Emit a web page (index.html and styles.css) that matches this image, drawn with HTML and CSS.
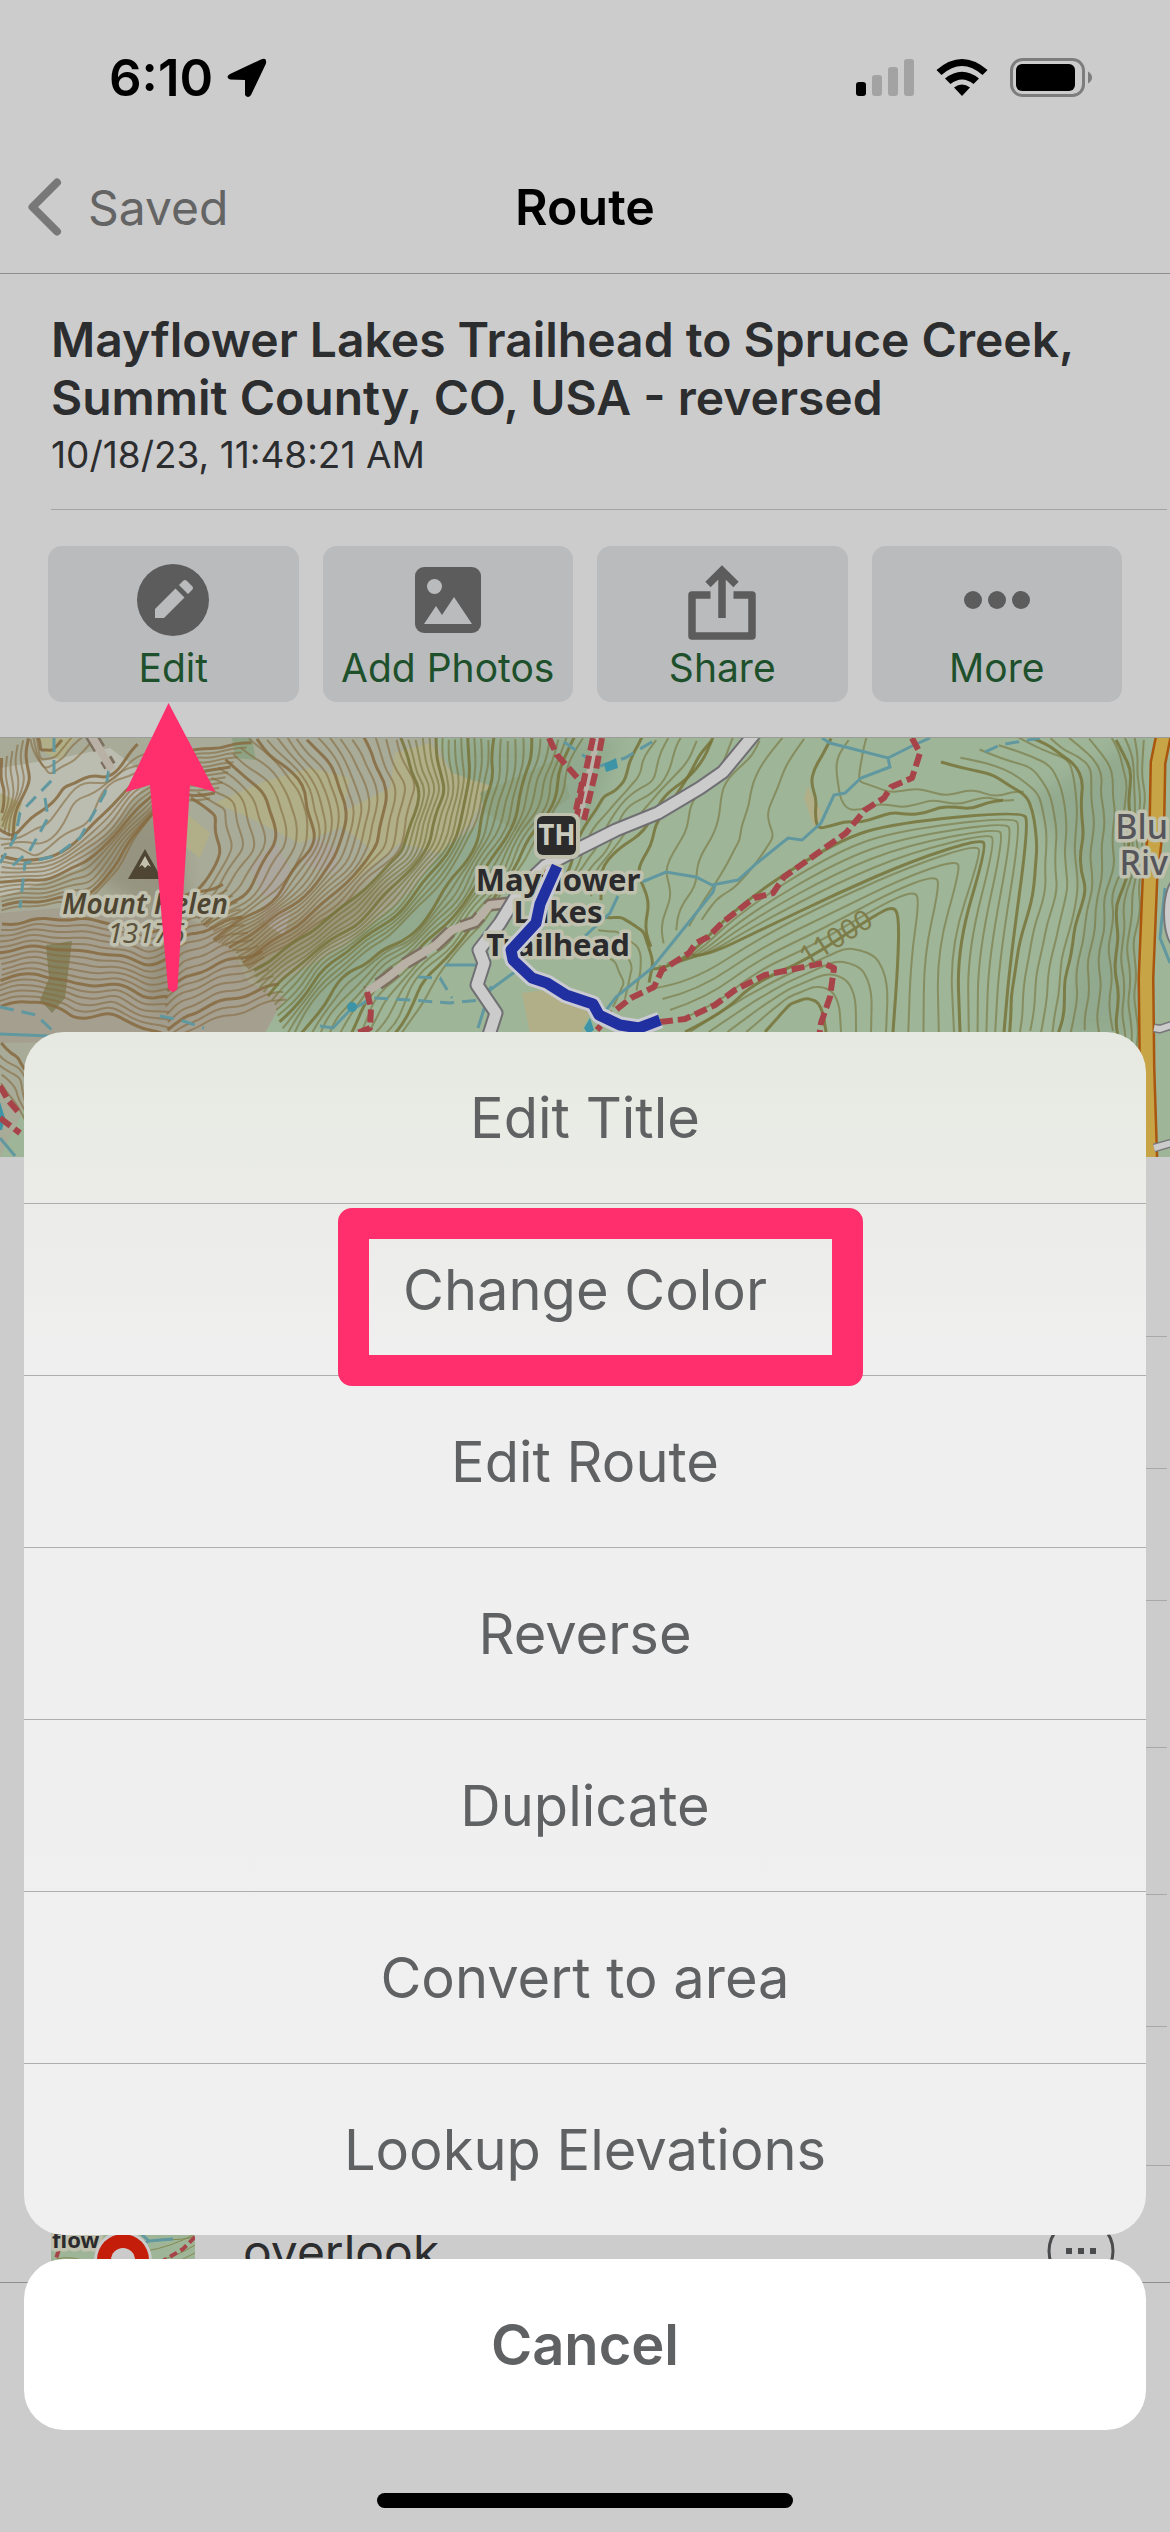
FILE: index.html
```html
<!DOCTYPE html>
<html lang="en">
<head>
  <meta charset="UTF-8" />
  <meta name="viewport" content="width=device-width, initial-scale=1.0" />
  <title>Route</title>
  <link rel="stylesheet" href="styles.css">
</head>
<body>
  <!-- Status bar -->
  <div class="status">
    <div class="status-left">
      <span>6:10</span>
      <svg width="40" height="40" viewBox="0 0 40 40"><path d="M3 16 L34 1.500 Q40 -1 39 5.500 L24 37 Q21 41 18 37 L18 22 L3 21.500 Q-2 19 3 16Z" /></svg>
    </div>
    <div class="status-right">
      <svg width="58" height="40" viewBox="0 0 58 40">
        <rect x="0" y="24" width="10" height="14" rx="3" />
        <g fill="#a3a3a3">
          <rect x="16" y="17" width="10" height="21" rx="3" />
          <rect x="32" y="9" width="10" height="29" rx="3" />
          <rect x="48" y="1" width="10" height="37" rx="3" />
        </g>
      </svg>
      <svg width="52" height="40" viewBox="0 0 52 40">
        <path d="M0.500 12 Q26 -10 51.500 12 L46.500 17 Q26 -1 5.500 17Z" />
        <path d="M9 20.500 Q26 7 43 20.500 L37.500 26 Q26 17 14.500 26Z" />
        <path d="M18 29.500 Q26 23.500 34 29.500 L26 38Z" />
      </svg>
      <svg width="82" height="40" viewBox="0 0 82 40">
        <rect x="1.500" y="1.500" width="72" height="36" rx="11" fill="none" stroke="#7d7d7d" stroke-width="3" />
        <rect x="6" y="6" width="59" height="27" rx="6" />
        <path d="M78 13.500 Q82 16 82 19.500 Q82 23 78 25.500Z" fill="#7d7d7d" />
      </svg>
    </div>
  </div>

  <!-- Nav bar -->
  <header class="nav">
    <a class="back" href="#">
      <svg width="36" height="60" viewBox="0 0 36 60"><path d="M29 5.500 L4.500 30 L29 54.500" fill="none" stroke="#787878" stroke-width="8" stroke-linecap="round" stroke-linejoin="round" /></svg>
      Saved
    </a>
    <h1>Route</h1>
  </header>

  <main>
    <section class="info">
      <h2>Mayflower Lakes Trailhead to Spruce Creek, Summit County, CO, USA - reversed</h2>
      <p>10/18/23, 11:48:21 AM</p>
    </section>

    <section class="actions">
      <div class="action">
        <button type="button">
          <svg width="72" height="72" viewBox="0 0 72 72">
            <circle cx="36" cy="36" r="36" />
            <path class="cut" d="M18 45 L38.500 24.500 L47.500 33.500 L27 54 H18Z M42 21 L46 17 Q48 15 50 17 L55 22 Q57 24 55 26 L51 30Z" />
          </svg>
          Edit
        </button>
        <svg class="arrow" width="96" height="292" viewBox="0 0 96 292">
          <path d="M43.500 1 L90.500 90 L65 83 L52.500 286 Q48 294 43 286 L25 83 L0.500 90Z" />
        </svg>
      </div>
      <div class="action">
        <button type="button">
          <svg width="72" height="72" viewBox="0 0 72 72">
            <rect x="3" y="3" width="66" height="66" rx="9" />
            <circle class="cut" cx="22.500" cy="22.500" r="7.500" />
            <path class="cut" d="M12 60 L24 42 L30 51 L42 33 L60 60Z" />
          </svg>
          Add Photos
        </button>
      </div>
      <div class="action">
        <button type="button">
          <svg width="72" height="76" viewBox="0 0 72 76">
            <g fill="none" stroke="#5c5c5c" stroke-width="7.500">
              <path d="M24.500 31 H6 V72 H66 V31 H47.500" stroke-linejoin="round" />
              <path d="M36 54 V8 M22 20.500 L36 6.500 L50 20.500" />
            </g>
          </svg>
          Share
        </button>
      </div>
      <div class="action">
        <button type="button">
          <svg width="72" height="72" viewBox="0 0 72 72">
            <circle cx="12" cy="36" r="9" />
            <circle cx="36" cy="36" r="9" />
            <circle cx="60" cy="36" r="9" />
          </svg>
          More
        </button>
      </div>
    </section>

    <!-- Map -->
    <svg class="map" viewBox="0 0 1170 419" preserveAspectRatio="xMidYMin slice">
      <defs>
        <filter id="soft" x="-20%" y="-20%" width="140%" height="140%"><feGaussianBlur stdDeviation="9" /></filter>
      </defs>
      <rect width="1170" height="419" fill="#9eb598" />
      <g fill="#8aa288" opacity="0.600" filter="url(#soft)">
        <path d="M450 0 L620 0 L590 90 L520 110 L440 190 L330 280 L290 290 L280 240 L420 150Z" />
        <path d="M1030 60 L1140 0 L1140 300 L1060 300 L1085 150Z" />
      </g>
      <path fill="#a8ab98" d="M0 0 H435 L452 36 L492 48 L476 88 L442 112 L414 150 L350 205 L268 250 L285 259 L262 300 H60 L0 419Z" />
      <path fill="#bcbdb1" d="M0 30 L60 20 L110 10 L150 40 L120 80 L80 130 L0 160Z" />
      <path fill="#a59f90" d="M0 175 L120 165 L222 190 L249 245 L285 259 L262 300 L0 305Z" />
      <path fill="#968b6c" opacity="0.700" filter="url(#soft)" d="M225 190 L300 180 L370 145 L405 150 L340 200 L265 248 L240 225Z" />
      <path fill="#8f8b76" opacity="0.700" filter="url(#soft)" d="M75 120 L140 60 L175 90 L190 170 L165 290 L145 250 L160 180 L110 150Z" />
      <g fill="#b0af88">
        <path d="M215 65 L260 45 L310 30 L350 40 L340 90 L300 105 L250 80Z" />
        <path d="M395 15 L430 5 L452 35 L490 48 L470 85 L440 115 L400 105 L350 145 L370 110 L330 80 L390 50Z" />
        <path d="M186 75 L210 95 L200 120 L180 105Z" />
        <path d="M0 55 L22 65 L15 95 L0 90Z" />
        <path d="M40 0 H75 L60 22 L45 15Z" />
        <path d="M522 255 L560 250 L592 272 L580 296 L530 296Z" />
        <path d="M808 48 L822 75 L815 92 L804 60Z" />
      </g>
      <g fill="#aca79e">
        <path d="M250 128 L275 104 L290 130 L285 160 L262 158Z" />
        <path d="M303 125 L315 102 L335 108 L338 135 L315 130Z" />
        <path d="M263 160 L290 175 L284 198 L264 184Z" />
      </g>
      <g fill="#8ea383">
        <path d="M232 0 H252 L256 22 L235 20Z" />
        <path d="M480 55 L560 20 L570 60 L520 95 L485 75Z" />
      </g>
      <path fill="#85835f" d="M46 207 L72 203 L65 260 L52 275 L40 262 L49 240Z" />

      <g id="contours" fill="none"></g>

      <g class="water">
        <path d="M822 0 L830 5 L888 20 L912 8 L930 0 M888 20 L890 29 L861 40 L845 55 L834 57 L821 85 L802 102 L788 100 L757 125 L738 142 L712 147 L696 139 L666 134 L642 144 M715 147 L713 154 L685 189 L652 230 L616 259 L604 275" />
        <path d="M1165 150 L1160 200 L1170 225 M618 158 L610 175 L585 198" />
        <path stroke-dasharray="14 8" d="M54 0 L54 40 L20 75 L15 100 L0 125 M45 60 L48 80 L30 112 L10 130 M109 30 L105 55 L80 100 L55 118 L25 125 L20 170 M355 270 L372 260 L410 262 L450 265 L480 262 L495 245 M418 239 L440 240 L452 260 M0 269 L36 277 L55 295 M160 278 L180 282 L204 290 M564 4 L590 22 M985 14 L1000 7 L1040 0 M600 28 L625 20 L655 2" />
        <path d="M0 296 L50 298 M0 400 L15 418 M320 288 L333 290 L350 272 M445 227 H478 M520 230 L490 252 L478 290" />
      </g>
      <g fill="#3d94a6">
        <circle cx="352" cy="269" r="5" />
        <path d="M604 26 L616 20 L618 30 L606 34Z M584 290 L590 280 L594 292 L588 296Z M0 364 L5 380 L2 392 L0 392Z" />
      </g>

      <!-- trails and roads -->
      <g fill="none" stroke-linejoin="round">
        <path stroke="#7d7060" stroke-width="13" stroke-dasharray="22 12" d="M509 165 L490 167 L475 184 L452 192 L436 207 L406 225 L387 240 L367 254 M88 -8 L110 28" />
        <path stroke="#bab1a6" stroke-width="8" d="M509 165 L490 167 L475 184 L452 192 L436 207 L406 225 L387 240 L367 254 M88 -8 L112 32" />
        <path class="road-case" d="M756 -6 L723 34 L700 50 L658 75 L616 92 L570 115 L545 128 L520 152 L500 185 L479 212 L484 225 L477 247 L496 275 L488 300" />
        <path class="road" d="M756 -6 L723 34 L700 50 L658 75 L616 92 L570 115 L545 128 L520 152 L500 185 L479 212 L484 225 L477 247 L496 275 L488 300" />
        <path stroke="#b9b5aa" stroke-width="6" d="M598 0 L590 32 L580 78" />
        <g class="trail">
          <path d="M367 254 L371 270 L370 290 L355 296" />
          <path d="M912 0 L920 15 L912 40 L891 49 L884 60 L865 72 L846 95 L815 117 L784 139 L773 155 L754 160 L723 184 L708 199 L696 205 L689 215 L662 232 L654 249 L631 260 L612 275 L597 292" />
          <path d="M660 284 L685 281 L715 267 L735 252 L765 237 L823 225 L834 230 L830 259 L821 285 L819 300" />
          <path d="M549 0 L557 17 L582 45 L576 72" />
          <path d="M593 0 L586 32 L576 82 M602 0 L596 32 L584 82" />
          <path d="M0 348 L8 362 L20 376 M0 380 L20 395" />
        </g>
        <path stroke="#a9560f" stroke-width="17" d="M1164 -5 L1158 25 L1157 80 L1150 140 L1146 240 L1147 330 L1150 425" />
        <path stroke="#c7a446" stroke-width="12" d="M1164 -5 L1158 25 L1157 80 L1150 140 L1146 240 L1147 330 L1150 425" />
        <path stroke="#77777a" stroke-width="9" d="M1154 290 L1160 291 L1175 286 M1154 410 L1175 404" />
        <path stroke="#cbcbcb" stroke-width="6" d="M1154 290 L1160 291 L1175 286 M1154 410 L1175 404" />
        <ellipse cx="1176" cy="175" rx="12" ry="34" fill="#cbcbcb" stroke="#77777a" stroke-width="2" />
      </g>

      <!-- map labels -->
      <path d="M145 111 L128 141 H162Z" fill="#4e4632" />
      <path d="M145 118 L139 129 L142 127 L145 130 L148 127 L151 129Z" fill="#c4c1ae" />
      <g class="halo">
        <text class="peak" x="145" y="176">Mount Helen</text>
        <text class="elev" x="146" y="205">13176</text>
        <text class="town" x="1168" y="101">Blu</text>
        <text class="town" x="1168" y="137">Riv</text>
        <text class="place" x="558" y="153">Mayflower</text>
        <text class="place" x="558" y="185">Lakes</text>
        <text class="place" x="558" y="218">Trailhead</text>
      </g>
      <text class="index" transform="translate(841 208) rotate(-32)">11000</text>
      <rect x="534" y="75" width="46" height="46" rx="8" fill="#bfbfae" />
      <rect x="537" y="78" width="39" height="39" rx="6" fill="#2b2b2b" />
      <text class="th" x="557" y="107">TH</text>

      <!-- the route itself -->
      <g fill="none" stroke-linejoin="round">
        <path stroke="#c9cad2" stroke-width="17" d="M555 131 L548 148 L540 166 L536 185 L511 212 L513 222 L532 240 L547 245 L566 257 L593 266 L599 277 L620 287 L639 290 L660 282" />
        <path stroke="#2130a0" stroke-width="11" d="M557 128 L548 148 L540 166 L536 185 L511 212 L513 222 L532 240 L547 245 L566 257 L593 266 L599 277 L620 287 L639 290 L660 282" />
      </g>
    </svg>

    <ul class="rows">
      <li class="tall"></li>
      <li></li>
      <li></li>
      <li class="mid"></li>
      <li class="mid"></li>
      <li></li>
      <li class="last"></li>
    </ul>

    <div class="waypoint">
      <svg width="144" height="144" viewBox="0 0 144 144">
        <rect width="144" height="144" fill="#9eb598" />
        <g fill="none" stroke="#85894f" stroke-width="1">
          <path d="M95 72 Q120 68 144 55 M105 82 Q125 78 144 66 M108 92 Q128 82 144 74 M5 80 Q20 76 40 84 M0 92 Q20 84 40 92 M110 60 Q125 62 144 58" />
        </g>
        <path d="M85 50 L98 62 L122 60 M98 62 L90 66" fill="none" stroke="#6198a0" stroke-width="3" />
        <path d="M144 58 L132 70 L112 82 M2 90 L8 70" fill="none" stroke="#a74449" stroke-width="4" stroke-dasharray="8 4" />
        <g class="halo">
          <text class="mini" x="1" y="69">flow</text>
        </g>
        <circle cx="72" cy="81" r="29" fill="#cbcbcb" />
        <circle cx="72" cy="81" r="26" fill="#c41e0b" />
        <circle cx="72" cy="81" r="12" fill="#cbcbcb" />
      </svg>
      <span>overlook</span>
      <button type="button" class="dots" aria-label="Waypoint options">
        <svg width="68" height="68" viewBox="0 0 68 68">
          <circle cx="34" cy="34" r="32" fill="none" stroke="#4a4b4d" stroke-width="3" />
          <path d="M19 31 h6 v6 h-6Z M31 31 h6 v6 h-6Z M43 31 h6 v6 h-6Z" fill="#4a4b4d" />
        </svg>
      </button>
    </div>
  </main>

  <footer class="tabbar"></footer>

  <!-- Action sheet -->
  <div class="sheet">
    <div class="options">
      <button type="button">Edit Title</button>
      <button type="button" class="marked">Change Color</button>
      <button type="button">Edit Route</button>
      <button type="button">Reverse</button>
      <button type="button">Duplicate</button>
      <button type="button">Convert to area</button>
      <button type="button">Lookup Elevations</button>
    </div>
    <button type="button" class="cancel">Cancel</button>
    <div class="home"></div>
  </div>

  <script src="script.js"></script>
</body>
</html>
```
FILE: styles.css
```css
*,
*::after {
  box-sizing: border-box;
}

body {
  margin: 0;
  min-height: 100vh;
  background-color: #ccc;
  font-family: Inter, "Liberation Sans", sans-serif;
  color: #2c2d2f;
}

button {
  border: none;
  margin: 0;
  padding: 0;
  background: none;
  font-family: inherit;
  cursor: pointer;
}

svg {
  display: block;
  flex: none;
}

/* status bar */
.status {
  display: flex;
  justify-content: space-between;
  align-items: center;
  height: 141px;
  padding: 14px 78px 0 109px;
  color: #000;
}

.status-left,
.status-right {
  display: flex;
  align-items: center;
}

.status-left {
  gap: 14px;
  font-size: 51px;
  font-weight: 600;
}

.status-right {
  gap: 22px;
}

/* nav bar */
.nav {
  display: grid;
  grid-template-columns: 1fr auto 1fr;
  align-items: center;
  height: 133px;
  border-bottom: 1px solid #8e8e8e;
}

.nav h1 {
  margin: 0;
  font-size: 50px;
  font-weight: 600;
  color: #000;
}

.back {
  display: flex;
  align-items: center;
  gap: 24px;
  padding-left: 28px;
  font-size: 48px;
  color: #646464;
  text-decoration: none;
}

.info {
  margin: 0 3px 0 51px;
  padding: 37px 40px 32px 0;
  border-bottom: 1px solid #a3a3a3;
}

.info h2 {
  margin: 0 0 6px;
  font-size: 48px;
  line-height: 58px;
  font-weight: 600;
}

.info p {
  margin: 0;
  font-size: 37px;
  line-height: 44px;
}

/* buttons above the map */
.actions {
  display: grid;
  grid-template-columns: repeat(4, 1fr);
  gap: 24px;
  padding: 36px 48px 35px;
}

.action {
  position: relative;
}

.action button {
  display: flex;
  flex-direction: column;
  align-items: center;
  justify-content: space-between;
  width: 100%;
  height: 156px;
  padding: 18px 0 10px;
  border-radius: 14px;
  background-color: #b9bbbd;
  font-size: 39px;
  line-height: 48px;
  color: #1d502b;
  fill: #5c5c5c;
  white-space: nowrap;
}

.cut {
  fill: #b9bbbd;
}

.arrow {
  position: absolute;
  top: 100%;
  left: 50%;
  z-index: 1;
  transform: translateX(-50%);
  fill: #ff2f6d;
}

/* map */
.map {
  width: 100%;
  height: 420px;
  border-top: 1px solid #9a9c98;
}

.contour {
  stroke-width: 2px;
  opacity: 0.6;
}

.contour.major {
  stroke-width: 3px;
  opacity: 0.85;
}

.water path {
  fill: none;
  stroke: #6198a0;
  stroke-width: 3px;
}

.road-case {
  stroke: #707074;
  stroke-width: 15px;
}

.road {
  stroke: #cbcbcb;
  stroke-width: 11px;
}

.trail path {
  stroke: #a74449;
  stroke-width: 6px;
  stroke-dasharray: 13 5;
}

.halo text {
  paint-order: stroke;
  stroke: #c1c1af;
  stroke-width: 7px;
  stroke-linejoin: round;
}

.map text,
.mini {
  font-family: "Noto Sans", "Open Sans", sans-serif;
}

.place,
.th,
.peak,
.elev,
.index {
  text-anchor: middle;
}

.place {
  font-size: 31px;
  font-weight: 700;
  fill: #2b2b2e;
}

.peak {
  font-size: 28px;
  font-weight: 600;
  font-style: italic;
  fill: #4e4632;
}

.elev {
  font-size: 28px;
  font-style: italic;
  fill: #5c533c;
}

.town {
  font-size: 34px;
  font-weight: 500;
  text-anchor: end;
  fill: #55555b;
}

.index {
  font-size: 28px;
  fill: #7d7c4a;
}

.th {
  font-size: 28px;
  font-weight: 700;
  fill: #cbcbbd;
}

.mini {
  font-size: 22px;
  font-weight: 700;
  fill: #2b2b2e;
}

/* list behind the sheet */
.rows {
  list-style: none;
  margin: 0;
  padding: 0;
}

.rows li {
  height: 132px;
  margin: 0 3px 0 51px;
  border-bottom: 1px solid #a8a8a8;
}

.rows .tall {
  height: 180px;
}

.rows .mid {
  height: 147px;
}

.rows .last {
  height: 139px;
  margin-right: 0;
}

.waypoint {
  display: flex;
  align-items: center;
  height: 170px;
  padding: 0 55px 0 51px;
  font-size: 48px;
}

.waypoint span {
  flex: 1;
  margin-left: 48px;
}

.tabbar {
  position: fixed;
  left: 0;
  right: 0;
  bottom: 0;
  height: 250px;
  border-top: 1px solid #8e8e8e;
  background-color: #ccc;
}

/* action sheet */
.sheet {
  position: fixed;
  left: 0;
  right: 0;
  bottom: 0;
  display: flex;
  flex-direction: column;
  padding: 0 24px 24px;
}

.sheet button {
  height: 171px;
  font-size: 56px;
  color: #5f6163;
}

.options {
  display: flex;
  flex-direction: column;
  gap: 1px;
  border-radius: 40px;
  background: linear-gradient(#e6e9e1, #ebece8 160px, #efefef 320px, #f0f0f0);
}

.options button {
  position: relative;
}

.options button + button {
  box-shadow: 0 -1px #adaead;
}

.options .marked {
  z-index: 1;
}

.marked::after {
  content: "";
  position: absolute;
  top: 4px;
  left: calc(50% - 247px);
  width: 525px;
  height: 178px;
  border: 31px solid #ff2f6d;
  border-radius: 14px;
}

.sheet .cancel {
  margin-top: 24px;
  border-radius: 40px;
  background-color: #fff;
  font-weight: 600;
}

.home {
  align-self: center;
  width: 416px;
  height: 15px;
  margin-top: 63px;
  border-radius: 8px;
  background-color: #000;
}
```
FILE: script.js
```js
// Contour lines: each family is blended between two hand-placed key lines
const OLIVE = "#77733a";
const BROWN = "#866a40";

const families = [
  // scree slope, lower left
  { color: BROWN, n: 16, wig: 2, a: [[0,186],[60,180],[110,184],[150,196],[172,180]], b: [[0,268],[40,262],[75,280],[110,276],[150,292],[168,300]] },
  { color: BROWN, n: 18, wig: 2, a: [[172,175],[185,160],[205,152],[225,146]], b: [[165,310],[185,292],[225,278],[285,260]] },
  // big shoulder in the middle
  { color: BROWN, n: 9, wig: 2, a: [[190,62],[215,75],[220,110],[205,145],[185,170]], b: [[250,0],[300,50],[310,105],[270,160],[215,195]] },
  { color: BROWN, n: 14, wig: 2, a: [[255,0],[305,50],[315,105],[275,160],[215,200]], b: [[395,0],[415,50],[400,110],[340,170],[250,230]] },
  { color: OLIVE, n: 14, wig: 2, a: [[400,0],[420,50],[405,110],[345,170],[253,232]], b: [[490,0],[482,65],[462,118],[400,190],[330,240],[290,300]] },
  { color: OLIVE, n: 12, wig: 3, a: [[495,0],[488,65],[470,118],[410,200],[340,240],[300,300]], b: [[580,0],[560,60],[525,120],[490,175],[450,220],[400,300]] },
  // ridge of Mount Helen
  { color: BROWN, n: 12, wig: 2, a: [[0,118],[40,125],[80,100],[110,70],[140,40],[190,12],[250,5]], b: [[0,172],[50,165],[85,165],[115,135],[140,92],[165,60],[210,62]] },
  { color: BROWN, n: 4, wig: 4, a: [[0,90],[20,95],[45,75],[60,45],[100,40],[140,10]], b: [[0,110],[35,116],[75,92],[105,56],[140,30],[185,2]] },
  { color: BROWN, n: 6, wig: 2, a: [[0,20],[5,50],[0,75]], b: [[28,0],[28,40],[18,75],[10,105]] },
  { color: BROWN, n: 4, wig: 2, a: [[36,0],[40,14],[52,12],[60,0]], b: [[30,0],[48,36],[70,26],[95,0]] },
  { color: BROWN, n: 5, wig: 2, a: [[0,305],[20,318],[30,345],[48,360]], b: [[0,345],[16,365],[30,400],[30,419]] },
  // valley east of the trailhead
  { color: OLIVE, n: 6, wig: 3, a: [[640,0],[628,40],[600,60],[585,95],[560,140]], b: [[714,0],[680,48],[640,90],[605,130],[598,160]] },
  { color: OLIVE, n: 5, wig: 3, a: [[714,0],[680,48],[655,90],[640,130],[645,160],[650,210]], b: [[803,0],[775,50],[769,72],[773,100],[735,150],[700,180]] },
  { color: OLIVE, n: 4, wig: 1, a: [[598,180],[620,178],[645,195],[652,225],[650,245]], b: [[600,215],[615,225],[625,245],[612,270]] },
  { color: OLIVE, n: 3, wig: 3, a: [[828,0],[812,40],[815,75],[822,92],[870,80],[1000,64]], b: [[870,0],[856,30],[860,48],[920,54],[1025,56]] },
  // spur with the 11000 line
  { color: OLIVE, n: 6, wig: 0, a: [[692,217],[704,219],[761,192],[838,155],[914,122],[980,101],[987,108],[957,209],[960,294]], b: [[650,231],[676,232],[740,165],[838,102],[895,85],[1022,73],[1029,85],[1010,225],[1004,294]] },
  { color: OLIVE, n: 5, wig: 0, a: [[685,294],[723,275],[754,245],[807,222],[872,179],[893,168],[899,178],[898,225],[893,294]], b: [[655,250],[690,245],[761,199],[838,160],[914,127],[978,106],[980,118],[950,209],[954,294]] },
  { color: OLIVE, n: 5, wig: 0, a: [[765,294],[790,266],[807,260],[818,264],[823,275],[826,294]], b: [[690,294],[740,262],[780,240],[850,208],[880,220],[888,250],[886,294]] },
  // steep side above the river
  { color: OLIVE, n: 5, wig: 1, a: [[940,25],[990,35],[1030,60],[1036,85],[1036,142],[1015,225],[1009,294]], b: [[1018,0],[1068,22],[1077,49],[1075,125],[1079,159],[1064,209],[1053,294]] },
  { color: OLIVE, n: 5, wig: 2, a: [[1030,0],[1074,20],[1083,49],[1081,125],[1085,159],[1070,209],[1060,294]], b: [[1111,0],[1129,42],[1123,65],[1125,125],[1113,159],[1110,209],[1111,294]] },
  { color: OLIVE, n: 4, wig: 2, a: [[1118,0],[1133,42],[1129,65],[1130,125],[1118,159],[1116,209],[1118,300]], b: [[1142,0],[1144,50],[1142,100],[1140,160],[1134,209],[1138,330]] },
];

const SVG = "http://www.w3.org/2000/svg";
const group = document.getElementById("contours");

// Point at fraction t along a polyline
function pointAt(line, t) {
  const lens = [];
  let total = 0;
  for (let i = 1; i < line.length; i++) {
    const d = Math.hypot(line[i][0] - line[i - 1][0], line[i][1] - line[i - 1][1]);
    lens.push(d);
    total += d;
  }
  let want = t * total;
  for (let i = 0; i < lens.length; i++) {
    if (want <= lens[i] || i === lens.length - 1) {
      const k = Math.min(want / lens[i], 1);
      return [
        line[i][0] + (line[i + 1][0] - line[i][0]) * k,
        line[i][1] + (line[i + 1][1] - line[i][1]) * k,
      ];
    }
    want -= lens[i];
  }
}

// Same number of points: blend corner by corner, otherwise resample
function blend(f, k) {
  let a = f.a;
  let b = f.b;
  if (a.length !== b.length || f.wig > 0) {
    a = [];
    b = [];
    for (let i = 0; i <= 18; i++) {
      a.push(pointAt(f.a, i / 18));
      b.push(pointAt(f.b, i / 18));
    }
  }
  return a.map((p, i) => {
    const x = p[0] + (b[i][0] - p[0]) * k;
    const y = p[1] + (b[i][1] - p[1]) * k;
    return [
      x + Math.sin(y / 9 + x / 31 + k * 2) * f.wig,
      y + Math.sin(x / 8 + k * 3) * f.wig,
    ];
  });
}

function smooth(pts) {
  let d = `M${pts[0][0].toFixed(1)} ${pts[0][1].toFixed(1)}`;
  for (let i = 1; i < pts.length - 1; i++) {
    const mx = (pts[i][0] + pts[i + 1][0]) / 2;
    const my = (pts[i][1] + pts[i + 1][1]) / 2;
    d += ` Q${pts[i][0].toFixed(1)} ${pts[i][1].toFixed(1)} ${mx.toFixed(1)} ${my.toFixed(1)}`;
  }
  const last = pts[pts.length - 1];
  return d + ` L${last[0].toFixed(1)} ${last[1].toFixed(1)}`;
}

families.forEach((f) => {
  for (let i = 0; i < f.n; i++) {
    const path = document.createElementNS(SVG, "path");
    path.setAttribute("d", smooth(blend(f, i / (f.n - 1))));
    path.setAttribute("stroke", f.color);
    path.setAttribute("class", i % 5 === 0 ? "contour major" : "contour");
    group.appendChild(path);
  }
});
```
